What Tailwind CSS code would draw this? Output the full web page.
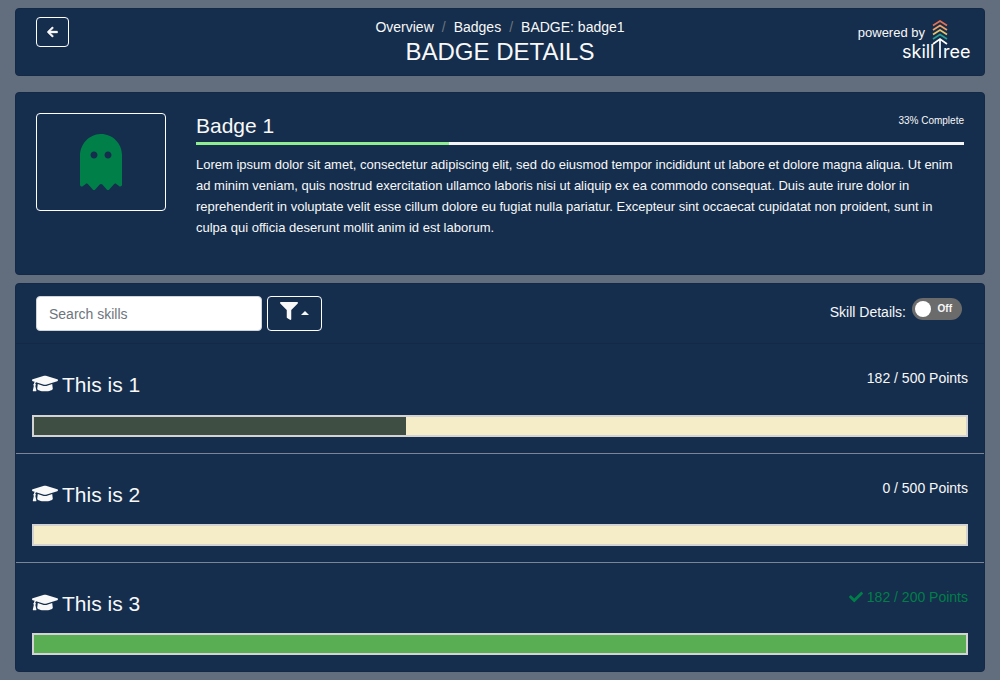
<!DOCTYPE html>
<html lang="en">
<head>
<meta charset="utf-8">
<meta name="viewport" content="width=device-width, initial-scale=1">
<title>Badge Details</title>
<script src="https://cdn.jsdelivr.net/npm/@tailwindcss/browser@4"></script>
</head>
<body class="min-h-screen bg-[#626d7d] px-[15px] py-2 font-['Liberation_Sans',sans-serif] text-sm text-[#f8f8f8]">
<svg class="hidden" aria-hidden="true">
  <symbol id="cap" viewBox="0 0 640 512"><path d="M622.34 153.2L343.4 67.5c-15.2-4.67-31.6-4.67-46.79 0L17.66 153.2c-23.54 7.23-23.54 38.36 0 45.59l48.63 14.94c-10.67 13.19-17.23 29.28-17.88 46.9C38.78 266.15 32 276.11 32 288c0 10.78 5.68 19.85 13.86 25.65L20.33 428.53C18.11 438.52 25.71 448 35.94 448h56.11c10.24 0 17.84-9.48 15.62-19.47L82.14 313.65C90.32 307.85 96 298.78 96 288c0-11.57-6.47-21.25-15.66-26.87.76-15.02 8.44-28.3 20.69-36.72L296.6 284.5c9.06 2.78 26.44 6.25 46.79 0l278.95-85.7c23.55-7.24 23.55-38.36 0-45.6zM352.79 315.09c-28.53 8.76-52.84 3.92-65.59 0l-145.02-44.55L128 384c0 35.35 85.96 64 192 64s192-28.65 192-64l-14.18-113.47-145.03 44.56z"/></symbol>
</svg>

<header class="grid h-[68px] grid-cols-[1fr_auto_1fr] items-start rounded border border-[#132945] bg-[#152e4d] px-5 pt-2">
  <button type="button" aria-label="Back" class="flex h-[30px] w-[33px] items-center justify-start rounded border border-white pl-[10px]">
    <svg class="h-3 w-[11px]" viewBox="0 0 448 512" fill="currentColor" stroke="currentColor" stroke-width="16" aria-hidden="true"><path d="M257.5 445.1l-22.2 22.2c-9.4 9.4-24.6 9.4-33.9 0L7 273c-9.4-9.4-9.4-24.6 0-33.9L201.4 44.7c9.4-9.4 24.6-9.4 33.9 0l22.2 22.2c9.5 9.5 9.3 25-.4 34.3L136.6 216H424c13.3 0 24 10.7 24 24v32c0 13.3-10.7 24-24 24H136.6l120.5 114.8c9.8 9.3 10 24.8.4 34.3z"/></svg>
  </button>
  <div class="text-center">
    <nav aria-label="Breadcrumb">
      <ol class="flex justify-center gap-2 leading-5">
        <li><a href="#">Overview</a></li>
        <li class="text-[#6c757d]" aria-hidden="true">/</li>
        <li><a href="#">Badges</a></li>
        <li class="text-[#6c757d]" aria-hidden="true">/</li>
        <li>BADGE: badge1</li>
      </ol>
    </nav>
    <h1 class="text-2xl leading-[30px]">BADGE DETAILS</h1>
  </div>
  <div class="relative flex justify-end pt-2 pr-[39px]">
    <span class="text-[13px] leading-4">powered by</span>
    <svg class="absolute top-[3px] -right-3 h-11 w-[74px] overflow-visible" viewBox="0 0 74 44" role="img" aria-label="SkillTree">
      <g fill="none" stroke-width="1.7">
        <path stroke="#e76f51" d="M31 5.500 38 1 45 5.500"/>
        <path stroke="#f4a261" d="M31 10 38 5.500 45 10"/>
        <path stroke="#e9c46a" d="M31 14.500 38 10 45 14.500"/>
        <path stroke="#2a9d8f" d="M31 19 38 14.500 45 19"/>
        <path stroke="#fff" d="M31 24 38 19 45 24M38 19V38"/>
      </g>
      <text x="0" y="38" fill="#fff" font-family="Inter" font-size="18">skill</text>
      <text x="41" y="38" fill="#fff" font-family="Inter" font-size="18">ree</text>
    </svg>
  </div>
</header>

<main>
  <section class="mt-4 flex h-[183px] gap-[30px] rounded border border-[#132945] bg-[#152e4d] p-5">
    <div class="flex h-[98px] w-[130px] shrink-0 items-center justify-center rounded-sm border border-white">
      <svg class="h-14 w-[42px]" viewBox="0 0 384 512" fill="#007f49" role="img" aria-label="Ghost badge"><path d="M186.1.09C81.01 3.24 0 94.92 0 200.05v263.92c0 14.26 17.23 21.39 27.31 11.31l24.92-18.53c6.66-4.95 16-3.99 21.51 2.21l42.95 48.35c6.25 6.25 16.38 6.25 22.63 0l40.72-45.85c6.37-7.17 17.56-7.17 23.92 0l40.72 45.85c6.25 6.25 16.38 6.25 22.63 0l42.95-48.35c5.51-6.2 14.85-7.17 21.51-2.21l24.92 18.53c10.08 10.08 27.31 2.94 27.31-11.31V192C384 84 294.83-3.17 186.1.09zM128 224c-17.67 0-32-14.33-32-32s14.33-32 32-32 32 14.33 32 32-14.33 32-32 32zm128 0c-17.67 0-32-14.33-32-32s14.33-32 32-32 32 14.33 32 32-14.33 32-32 32z"/></svg>
    </div>
    <div class="min-w-0 flex-1">
      <div class="flex justify-between">
        <h2 class="text-[21px] leading-[25px]">Badge 1</h2>
        <span class="text-[10px] leading-[15px]">33% Complete</span>
      </div>
      <div class="mt-1 h-[3px] bg-[#f5f5f5]" role="progressbar" aria-label="Badge progress" aria-valuenow="33" aria-valuemin="0" aria-valuemax="100"><div class="h-full bg-[#90ee90]" style="width:33%"></div></div>
      <p class="mt-[9px] text-[13px] leading-[21px]">Lorem ipsum dolor sit amet, consectetur adipiscing elit, sed do eiusmod tempor incididunt ut labore et dolore magna aliqua. Ut enim ad minim veniam, quis nostrud exercitation ullamco laboris nisi ut aliquip ex ea commodo consequat. Duis aute irure dolor in reprehenderit in voluptate velit esse cillum dolore eu fugiat nulla pariatur. Excepteur sint occaecat cupidatat non proident, sunt in culpa qui officia deserunt mollit anim id est laborum.</p>
    </div>
  </section>

  <section class="mt-2 rounded border border-[#132945] bg-[#152e4d]">
    <div class="flex h-[60px] items-start border-b border-[#132945] pt-3 pr-[22px] pl-5">
      <input type="text" aria-label="Search skills" placeholder="Search skills" class="h-[35px] w-[226px] rounded border border-[#ced4da] bg-white px-3 text-sm text-[#495057] placeholder:text-[#6c757d]">
      <button type="button" aria-label="Filter skills" class="ml-[5px] flex h-[35px] w-[55px] items-start gap-[3px] rounded border border-white pt-[5px] pl-3">
        <svg class="h-[18px] w-[18px]" viewBox="0 0 512 512" fill="currentColor" aria-hidden="true"><path d="M487.976 0H24.028C2.71 0-8.047 25.866 7.058 40.971L192 225.941V432c0 7.831 3.821 15.17 10.237 19.662l80 55.98C298.02 518.69 320 507.493 320 487.98V225.941l184.947-184.97C520.021 25.896 509.338 0 487.976 0z"/></svg>
        <svg class="mt-[9px] h-1 w-2" viewBox="0 0 8 4" fill="currentColor" aria-hidden="true"><path d="M0 4 4 0l4 4z"/></svg>
      </button>
      <label class="ml-auto flex items-start gap-[6px] pt-[2px]">
        <span class="pt-1 leading-5">Skill Details:</span>
        <span class="relative flex h-[22px] w-[50px] items-center justify-between rounded-full bg-[#6b6b6b] pr-[10px] pl-[3px]">
          <input type="checkbox" role="switch" class="absolute inset-0 h-full w-full cursor-pointer opacity-0">
          <span class="h-4 w-4 rounded-full bg-white"></span>
          <span class="text-[10px] leading-none font-bold">Off</span>
        </span>
      </label>
    </div>
    <ul>
      <li class="border-b border-[#7b8593] px-4 pt-6 pb-4">
        <div class="flex h-[47px] items-start justify-between">
          <h3 class="flex items-center gap-1 pt-1 text-[21px] leading-[26px]"><svg class="mb-[3px] h-[21px] w-[26px]" fill="currentColor" aria-hidden="true"><use href="#cap"/></svg>This is 1</h3>
          <span class="leading-5">182 / 500 Points</span>
        </div>
        <div class="h-[22px] border-2 border-[#d3d3d3] bg-[#f5edc8]" role="progressbar" aria-label="This is 1" aria-valuenow="182" aria-valuemin="0" aria-valuemax="500"><div class="h-full bg-[#3e4e43]" style="width:39.9%"></div></div>
      </li>
      <li class="border-b border-[#7b8593] px-4 pt-6 pb-4">
        <div class="flex h-[46px] items-start justify-between">
          <h3 class="flex items-center gap-1 pt-1 text-[21px] leading-[26px]"><svg class="mb-[3px] h-[21px] w-[26px]" fill="currentColor" aria-hidden="true"><use href="#cap"/></svg>This is 2</h3>
          <span class="leading-5">0 / 500 Points</span>
        </div>
        <div class="h-[22px] border-2 border-[#d3d3d3] bg-[#f5edc8]" role="progressbar" aria-label="This is 2" aria-valuenow="0" aria-valuemin="0" aria-valuemax="500"></div>
      </li>
      <li class="px-4 pt-6 pb-4">
        <div class="flex h-[46px] items-start justify-between">
          <h3 class="flex items-center gap-1 pt-1 text-[21px] leading-[26px]"><svg class="mb-[3px] h-[21px] w-[26px]" fill="currentColor" aria-hidden="true"><use href="#cap"/></svg>This is 3</h3>
          <span class="flex items-center gap-1 leading-5 text-[#007f49]"><svg class="h-[14px] w-[14px]" viewBox="0 0 512 512" fill="currentColor" aria-hidden="true"><path d="M173.898 439.404l-166.4-166.4c-9.997-9.997-9.997-26.206 0-36.204l36.203-36.204c9.997-9.998 26.207-9.998 36.204 0L192 312.69 432.095 72.596c9.997-9.997 26.207-9.997 36.204 0l36.203 36.204c9.997 9.997 9.997 26.206 0 36.204l-294.4 294.401c-9.998 9.997-26.207 9.997-36.204-.001z"/></svg>182 / 200 Points</span>
        </div>
        <div class="h-[22px] border-2 border-[#d3d3d3] bg-[#59ad52]" role="progressbar" aria-label="This is 3" aria-valuenow="182" aria-valuemin="0" aria-valuemax="200"></div>
      </li>
    </ul>
  </section>
</main>
</body>
</html>
